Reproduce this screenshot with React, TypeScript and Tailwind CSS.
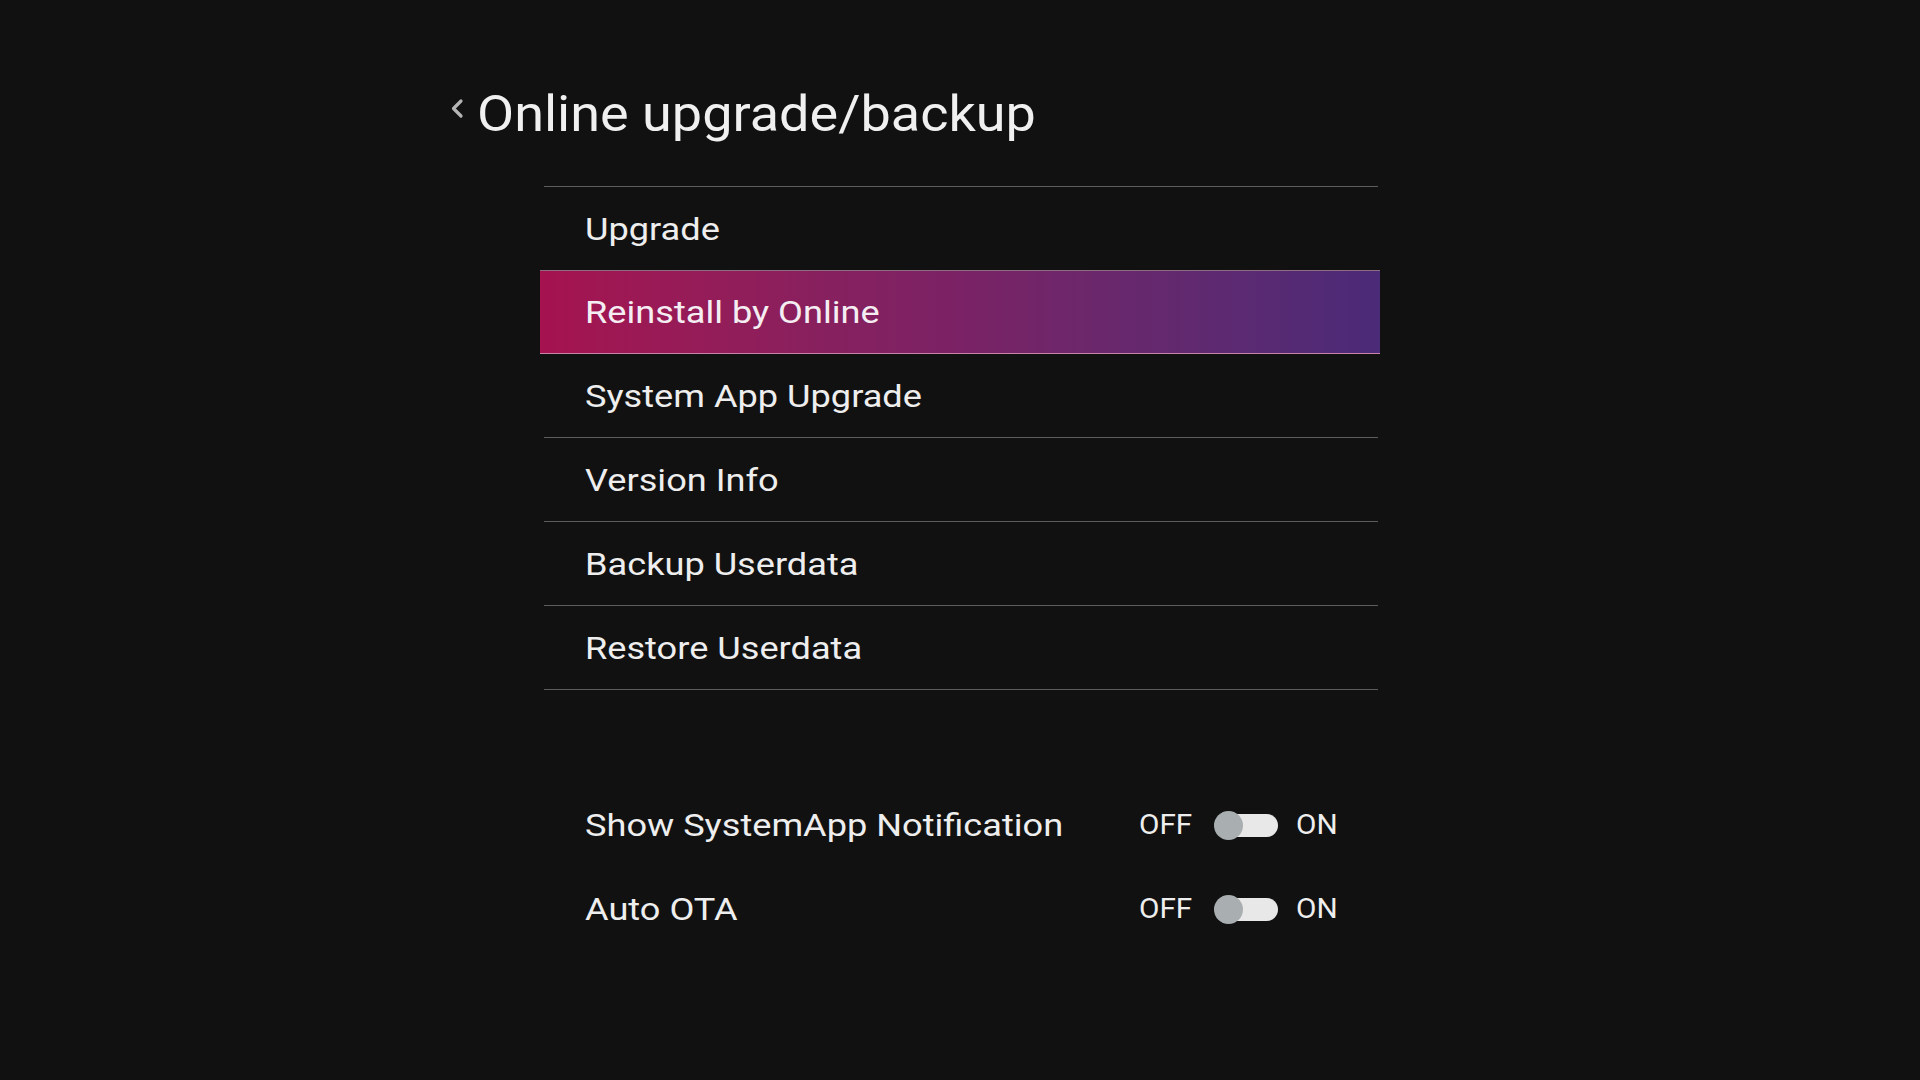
import React from "react";

const T = ({ children, className = "" }: { children: React.ReactNode; className?: string }) => (
  <span className={"inline-block origin-left whitespace-nowrap " + className}>{children}</span>
);

const items = [
  "Upgrade",
  "Reinstall by Online",
  "System App Upgrade",
  "Version Info",
  "Backup Userdata",
  "Restore Userdata",
];

function Toggle() {
  return (
    <div className="flex items-center">
      <div className="w-[75px] text-[27px] leading-none text-[#eeeeee]">
        <T className="scale-x-[1.1]">OFF</T>
      </div>
      <div className="relative w-[64px] h-[29px]">
        <div className="absolute right-0 top-[3px] h-[23px] w-[54px] rounded-full bg-[#e8e8e8]" />
        <div className="absolute left-0 top-0 h-[29px] w-[29px] rounded-full bg-[#a9aeb0]" />
      </div>
      <div className="ml-[18px] text-[27px] leading-none text-[#eeeeee]">
        <T className="scale-x-[1.1]">ON</T>
      </div>
    </div>
  );
}

export default function App() {
  return (
    <div
      className="w-[1920px] h-[1080px] bg-[#111111] text-[#eeeeee] overflow-hidden"
      style={{ fontFamily: "Roboto, 'Liberation Sans', sans-serif" }}
    >
      <div className="ml-[440px] w-[940px] pt-[84px]">
        <div className="flex items-start h-[60px]">
          <svg width="15" height="24" viewBox="0 0 15 24" className="ml-[9px] mt-[13px] shrink-0">
            <polyline points="12,4 4.5,11.5 12,19" fill="none" stroke="#b4b4b4" strokeWidth="3.2" strokeLinecap="round" strokeLinejoin="round" />
          </svg>
          <div className="ml-[13px] text-[50px] leading-[60px] text-[#f0f0f0]">
            <T className="scale-x-[1.08]">Online upgrade/backup</T>
          </div>
        </div>

        <div className="mt-[42px] ml-[104px] w-[834px] border-t border-[#5c5c5c]">
          {items.map((label, i) => {
            if (i === 1) {
              return (
                <div
                  key={label}
                  className="-ml-[4px] -mr-[2px] h-[84px] flex items-center pl-[45px] bg-linear-to-r from-[#a5124f] via-[#7a2265] to-[#4b2a77] border-t border-[#8e6c82] border-b border-b-[#c784a8] text-[32px] text-[#f4eef2]"
                >
                  <T className="scale-x-[1.13]">{label}</T>
                </div>
              );
            }
            return (
              <div
                key={label}
                className={
                  "flex items-center pl-[41px] text-[32px] " +
                  (i === 0 ? "h-[83px]" : "h-[84px] border-b border-[#5c5c5c]")
                }
              >
                <T className="scale-x-[1.13]">{label}</T>
              </div>
            );
          })}
        </div>

        <div className="mt-[93px] ml-[104px] w-[834px]">
          {["Show SystemApp Notification", "Auto OTA"].map((label) => (
            <div key={label} className="h-[84px] flex items-center pl-[41px]">
              <div className="w-[554px] text-[32px]">
                <T className="scale-x-[1.13]">{label}</T>
              </div>
              <Toggle />
            </div>
          ))}
        </div>
      </div>
    </div>
  );
}
